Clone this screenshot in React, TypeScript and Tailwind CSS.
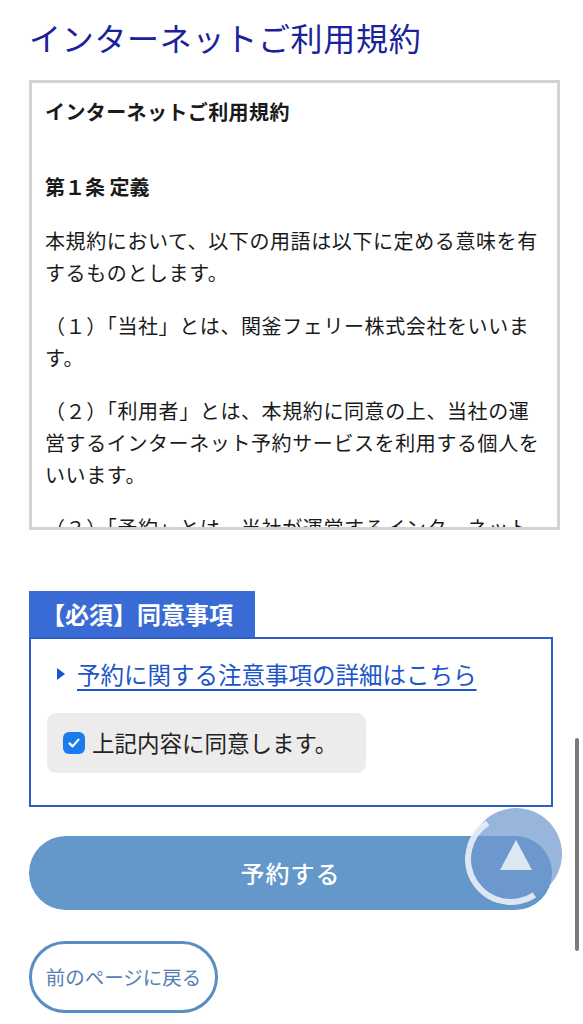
import { useState } from "react";

const jp = { fontFamily: '"Noto Sans CJK JP", "Noto Sans", sans-serif' };

const paragraphs = [
  "本規約において、以下の用語は以下に定める意味を有するものとします。",
  "（１）「当社」とは、関釜フェリー株式会社をいいます。",
  "（２）「利用者」とは、本規約に同意の上、当社の運営するインターネット予約サービスを利用する個人をいいます。",
  "（３）「予約」とは、当社が運営するインターネット予約サービスを通じて行う乗船の申込みをいいます。",
];

const App = () => {
  const [agreed, setAgreed] = useState(true);

  return (
    <div className="relative w-full min-h-screen bg-white overflow-hidden px-[29px] pb-[12px]" style={jp}>
      <h1 className="pt-[15px] text-[32px] leading-[44px] tracking-[0.7px] text-[#1a239c] font-normal">
        インターネットご利用規約
      </h1>

      {/* terms box */}
      <div className="mt-[21px] w-[531px] h-[450px] border-[3px] border-[#d3d3d3] overflow-hidden px-[13px] pt-[13px] text-[#1a1a1a]">
        <p className="text-[20px] leading-[32px] font-bold tracking-[0.4px]">インターネットご利用規約</p>
        <p className="mt-[43px] text-[20px] leading-[32px] font-bold">第１条 定義</p>
        <div className="mt-[22px] flex flex-col gap-[21px]">
          {paragraphs.map((t) => (
            <p key={t} className="text-[20px] leading-[32px] tracking-[0.6px]">
              {t}
            </p>
          ))}
        </div>
      </div>

      {/* agreement */}
      <div className="mt-[61px]">
        <div className="w-[226px] h-[46px] bg-[#3a6bd5] text-white text-[24px] font-bold leading-[46px] pl-[12px]">
          【必須】同意事項
        </div>
        <div className="w-[524px] border-2 border-[#2a5ecb] pt-[18px] pb-[32px] pl-[16px]">
          <a href="#" className="ml-[10px] flex items-center gap-[12px] text-[23.5px] leading-[34px] text-[#1c55c9]">
            <svg width="8" height="12" viewBox="0 0 8 12" className="shrink-0">
              <path d="M0 0 L8 6 L0 12 Z" fill="#1c55c9" />
            </svg>
            <span className="underline underline-offset-[5px] decoration-[2px]">予約に関する注意事項の詳細はこちら</span>
          </a>
          <label className="mt-[22px] w-[319px] h-[60px] rounded-[9px] bg-[#ececec] flex items-center pl-[16px] gap-[7px] cursor-pointer">
            <button
              type="button"
              onClick={() => setAgreed(!agreed)}
              className={
                agreed
                  ? "w-[22px] h-[22px] rounded-[6px] bg-[#1a7bef] flex items-center justify-center"
                  : "w-[22px] h-[22px] rounded-[6px] bg-white border border-[#999] flex items-center justify-center"
              }
            >
              {agreed && (
                <svg width="14" height="14" viewBox="0 0 14 14">
                  <path d="M2.5 7.4 L5.6 10.4 L11.5 3.6" stroke="white" strokeWidth="2.2" fill="none" strokeLinecap="round" strokeLinejoin="round" />
                </svg>
              )}
            </button>
            <span className="text-[22.5px] text-[#222]">上記内容に同意します。</span>
          </label>
        </div>
      </div>

      <button className="mt-[29px] w-[523px] h-[74px] rounded-full bg-[#6497ca] text-white text-[24px] font-medium tracking-[1px] flex items-center justify-center">
        予約する
      </button>

      <button className="mt-[31px] w-[189px] h-[72px] rounded-full border-[3px] border-[#5a8dc3] bg-white text-[19.5px] text-[#5682b3] flex items-center justify-center">
        前のページに戻る
      </button>

      {/* scroll to top */}
      <div className="absolute left-[470px] top-[808px] w-[92px] h-[92px] rounded-full bg-[rgba(112,152,206,0.72)]" />
      <div className="absolute left-[465px] top-[813px] w-[92px] h-[92px] rounded-full border-[6px] border-transparent border-l-[rgba(228,235,246,0.95)] border-b-[rgba(228,235,246,0.95)] rotate-[12deg]" />
      <svg className="absolute left-[500px] top-[840px]" width="32" height="30" viewBox="0 0 32 30">
        <path d="M16 0 L32 30 L0 30 Z" fill="#dde6f3" />
      </svg>

      {/* overlay scrollbar */}
      <div className="absolute left-[575px] top-[738px] w-[4px] h-[213px] rounded-full bg-[#7b7b7b]" />
    </div>
  );
};

export default App;
